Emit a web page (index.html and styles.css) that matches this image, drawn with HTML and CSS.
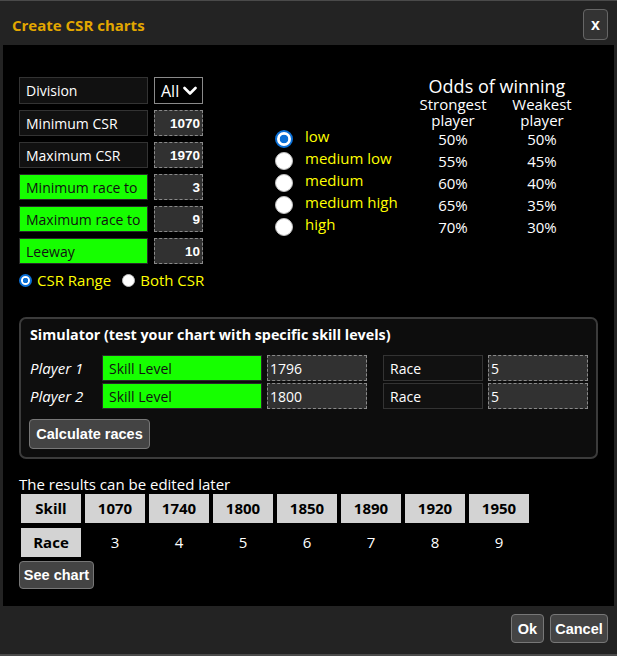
FILE: index.html
```html
<!DOCTYPE html>
<html lang="en">
<head>
<meta charset="utf-8">
<title>Create CSR charts</title>
<link rel="stylesheet" href="styles.css">
</head>
<body>
<div class="win">
  <header class="hdr">
    <span class="title">Create CSR charts</span>
    <button class="close">x</button>
  </header>
  <main class="body">
    <section class="top">
      <div class="settings">
        <div class="row">
          <div class="lbl">Division</div>
          <div class="sel">All
            <svg class="chev" width="14" height="10" viewBox="0 0 14 10"><polyline points="1.5,2 7,7.5 12.5,2" fill="none" stroke="#fff" stroke-width="2.6" stroke-linecap="round" stroke-linejoin="round"/></svg>
          </div>
        </div>
        <div class="row"><div class="lbl">Minimum CSR</div><input class="num" type="text" value="1070"></div>
        <div class="row"><div class="lbl">Maximum CSR</div><input class="num" type="text" value="1970"></div>
        <div class="row"><div class="lbl green">Minimum race to</div><input class="num" type="text" value="3"></div>
        <div class="row"><div class="lbl green">Maximum race to</div><input class="num" type="text" value="9"></div>
        <div class="row"><div class="lbl green">Leeway</div><input class="num" type="text" value="10"></div>
        <div class="mode">
          <label class="opt"><input class="rs" type="radio" name="m" checked>CSR Range</label>
          <label class="opt"><input class="rs" type="radio" name="m">Both CSR</label>
        </div>
      </div>
      <div class="odds">
        <div class="sp"></div>
        <div class="oh">Odds of winning</div>
        <div class="ph c3">Strongest<br>player</div>
        <div class="ph c4">Weakest<br>player</div>

        <input class="rb" type="radio" name="lv" checked><span class="lv">low</span><span class="pc">50%</span><span class="pc">50%</span>
        <input class="rb" type="radio" name="lv"><span class="lv">medium low</span><span class="pc">55%</span><span class="pc">45%</span>
        <input class="rb" type="radio" name="lv"><span class="lv">medium</span><span class="pc">60%</span><span class="pc">40%</span>
        <input class="rb" type="radio" name="lv"><span class="lv">medium high</span><span class="pc">65%</span><span class="pc">35%</span>
        <input class="rb" type="radio" name="lv"><span class="lv">high</span><span class="pc">70%</span><span class="pc">30%</span>
      </div>
    </section>

    <section class="sim">
      <div class="sim-title">Simulator (test your chart with specific skill levels)</div>
      <div class="prow">
        <span class="pl">Player 1</span>
        <div class="slbl green">Skill Level</div>
        <input class="sin" type="text" value="1796">
        <div class="slbl rlbl">Race</div>
        <input class="sin" type="text" value="5">
      </div>
      <div class="prow">
        <span class="pl">Player 2</span>
        <div class="slbl green">Skill Level</div>
        <input class="sin" type="text" value="1800">
        <div class="slbl rlbl">Race</div>
        <input class="sin" type="text" value="5">
      </div>
      <button class="btn calc">Calculate races</button>
    </section>

    <p class="note">The results can be edited later</p>
    <div class="chart">
      <div class="hc">Skill</div><div class="hc">1070</div><div class="hc">1740</div><div class="hc">1800</div><div class="hc">1850</div><div class="hc">1890</div><div class="hc">1920</div><div class="hc">1950</div>
      <div class="hc">Race</div><div class="vc">3</div><div class="vc">4</div><div class="vc">5</div><div class="vc">6</div><div class="vc">7</div><div class="vc">8</div><div class="vc">9</div>
    </div>
    <button class="btn see">See chart</button>
  </main>
  <footer class="ftr">
    <button class="btn ok">Ok</button>
    <button class="btn cancel">Cancel</button>
  </footer>
</div>
</body>
</html>
```

FILE: styles.css
```css
* { box-sizing: border-box; }
html, body { margin: 0; padding: 0; }
body {
  background: #232323;
  font-family: "Open Sans", "Noto Sans", sans-serif;
  color: #fff;
}
.win {
  border-top: 1px solid #4a4a4a;
  border-bottom: 2px solid #4a4a4a;
  background: #232323;
}
.hdr {
  height: 44px;
  display: flex;
  align-items: flex-start;
  justify-content: space-between;
  padding: 8px 9px 0 12px;
}
.title {
  padding-top: 6px;
  line-height: 20px;
  font-size: 15px;
  font-weight: 700;
  color: #e2a700;
}
.close {
  width: 25px;
  height: 31px;
  padding: 0;
  background: #333;
  border: 1px solid #666;
  border-radius: 4px;
  color: #fff;
  font-family: "Liberation Sans", Arial, sans-serif;
  font-weight: 700;
  font-size: 16px;
  line-height: 1;
}
.body {
  margin: 0 3px;
  background: #000;
  padding: 32px 16px 17px;
}
.top {
  display: flex;
  gap: 72px;
}
.settings {
  display: flex;
  flex-direction: column;
  gap: 6px;
  width: 184px;
}
.row {
  display: flex;
  gap: 6px;
  height: 26px;
}
.row:first-child { height: 27px; }
.lbl {
  width: 129px;
  background: #111;
  border: 1px solid #333;
  padding-left: 6px;
  font-size: 14px;
  line-height: 25px;
  color: #fff;
  white-space: nowrap;
}
.lbl.green, .slbl.green {
  background: #16ff00;
  color: #111;
  border-color: #2a2a2a;
}
.sel {
  width: 49px;
  border: 1px solid #8a8a8a;
  background: #000;
  display: flex;
  align-items: center;
  gap: 4px;
  padding-left: 6px;
  font-size: 16px;
  font-weight: 500;
  color: #fff;
}
.chev { display: block; }
.num {
  width: 49px;
  height: 26px;
  margin: 0;
  background: #313131;
  border: 1px dashed #8a8a8a;
  color: #fff;
  text-align: right;
  padding: 0 2px 0 0;
  font-family: "Liberation Sans", Arial, sans-serif;
  font-weight: 700;
  font-size: 13.5px;
  outline: none;
}
.mode {
  display: flex;
  gap: 11px;
  height: 20px;
  align-items: center;
}
.opt {
  display: flex;
  align-items: center;
  gap: 5px;
  color: #ffff00;
  font-size: 15px;
  line-height: 20px;
  white-space: nowrap;
}
.rs, .rb {
  appearance: none;
  -webkit-appearance: none;
  margin: 0;
  border-radius: 50%;
  background: #fff;
  border: 1px solid #bdbdbd;
}
.rs { width: 13px; height: 13px; }
.rs:checked {
  border: 2px solid #0a6fd6;
  background: radial-gradient(circle, #0a6fd6 0 2.5px, #fff 3px);
}
.rb { width: 18px; height: 18px; align-self: center; }
.rb:checked {
  border: 2px solid #0a6fd6;
  background: radial-gradient(circle, #0a6fd6 0 4px, #fff 4.6px);
}
.odds {
  display: grid;
  grid-template-columns: 30px 103px 90px 88px;
  grid-template-rows: 19px 32px;
  grid-auto-rows: 22px;
  align-content: start;
}
.sp {
  grid-column: 1 / 3;
  grid-row: 1 / 3;
}
.oh {
  grid-column: 3 / 5;
  grid-row: 1;
  text-align: center;
  font-size: 18px;
  line-height: 19px;
  white-space: nowrap;
}
.ph {
  grid-row: 2;
  text-align: center;
  font-size: 15px;
  line-height: 16px;
}
.c3 { grid-column: 3; }
.c4 { grid-column: 4; }
.lv {
  color: #ffff00;
  font-size: 15px;
  line-height: 16px;
  align-self: start;
  white-space: nowrap;
}
.pc {
  text-align: center;
  font-size: 15px;
  line-height: 22px;
}
.sim {
  margin-top: 27px;
  border: 2px solid #3b3b3b;
  border-radius: 7px;
  background: #0d0d0d;
  padding: 6px 7px 8px 9px;
}
.sim-title {
  font-size: 14.3px;
  font-weight: 700;
  line-height: 20px;
  margin-bottom: 10px;
  white-space: nowrap;
}
.prow {
  display: flex;
  align-items: center;
  height: 26px;
  margin-bottom: 2px;
}
.prow + .prow { margin-bottom: 10px; }
.pl {
  width: 72px;
  font-style: italic;
  font-size: 15px;
}
.slbl {
  height: 26px;
  width: 160px;
  background: #111;
  border: 1px solid #333;
  padding-left: 6px;
  font-size: 14px;
  line-height: 25px;
}
.rlbl {
  width: 100px;
  margin-left: 16px;
  color: #fff;
}
.sin {
  width: 100px;
  height: 26px;
  margin: 0 0 0 5px;
  background: #313131;
  border: 1px dashed #8a8a8a;
  color: #fff;
  padding: 0 0 0 2px;
  font-family: "Open Sans", sans-serif;
  font-size: 14px;
  outline: none;
}
.btn {
  background: #444;
  border: 1px solid #777;
  border-radius: 4px;
  color: #fff;
  font-family: "Liberation Sans", Arial, sans-serif;
  font-weight: 700;
  font-size: 14.5px;
  padding: 0;
}
.calc {
  display: block;
  width: 121px;
  height: 30px;
  margin-left: -1px;
}
.note {
  margin: 15px 0 0;
  font-size: 15px;
  line-height: 20px;
}
.chart {
  display: grid;
  grid-template-columns: repeat(8, 60px);
  grid-auto-rows: 29px;
  column-gap: 4px;
  row-gap: 5px;
  padding-left: 2px;
}
.hc {
  background: #d3d3d3;
  color: #000;
  font-weight: 700;
  font-size: 15px;
  text-align: center;
  line-height: 29px;
}
.vc {
  text-align: center;
  font-size: 15px;
  line-height: 29px;
  color: #fff;
}
.see {
  display: block;
  margin-top: 4px;
  width: 75px;
  height: 28px;
}
.ftr {
  height: 48px;
  display: flex;
  justify-content: flex-end;
  align-items: flex-start;
  gap: 6px;
  padding: 8px 9px 0 0;
}
.ok { width: 33px; height: 29px; }
.cancel { width: 58px; height: 29px; }
```
